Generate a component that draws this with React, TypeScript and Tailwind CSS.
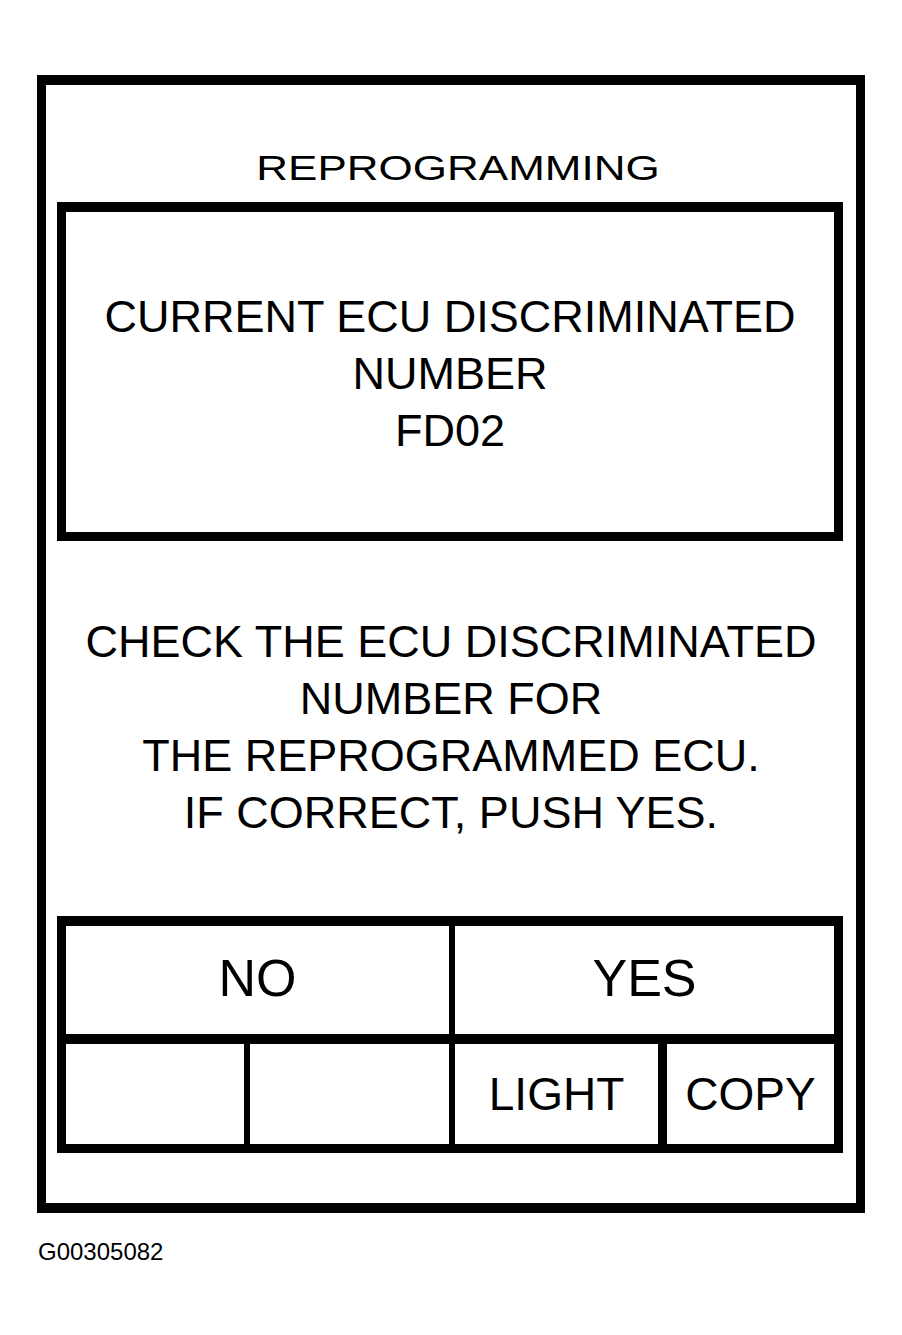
export default function App() {
  return (
    <div className="min-h-[1335px] w-[902px] bg-white pt-[75px] text-black font-['Liberation_Sans',Arial,Helvetica,sans-serif]">
      {/* screen frame */}
      <div className="ml-[37px] flex h-[1138px] w-[828px] flex-col border-x-[9px] border-y-[10px] border-black">
        {/* title */}
        <div className="mt-[61px] h-[44px] scale-y-[0.79] pl-[14px] text-center text-[44px] leading-[44px]">
          REPROGRAMMING
        </div>

        {/* current number panel */}
        <div className="ml-[11px] mt-[12px] h-[339px] w-[786px] border-[9px] border-t-[10px] border-black pt-[76px] text-center text-[45px] leading-[57px]">
          <div>CURRENT ECU DISCRIMINATED</div>
          <div>NUMBER</div>
          <div>FD02</div>
        </div>

        {/* instructions */}
        <div className="mt-[72px] text-center text-[45px] leading-[57px]">
          <div>CHECK THE ECU DISCRIMINATED</div>
          <div>NUMBER FOR</div>
          <div>THE REPROGRAMMED ECU.</div>
          <div>IF CORRECT, PUSH YES.</div>
        </div>

        {/* soft keys */}
        <div className="ml-[11px] mt-[75px] w-[786px] border-[9px] border-t-[10px] border-black">
          <div className="flex h-[108px]">
            <div className="flex w-[389px] items-center justify-center border-r-[6px] border-black pb-1 text-[52px] leading-[52px]">
              NO
            </div>
            <div className="flex flex-1 items-center justify-center pb-1 text-[52px] leading-[52px]">
              YES
            </div>
          </div>
          <div className="flex h-[110px] border-t-[10px] border-black text-[46px] leading-[46px]">
            <div className="w-[184px] border-r-[6px] border-black" />
            <div className="w-[205px] border-r-[6px] border-black" />
            <div className="flex w-[212px] items-center justify-center border-r-[9px] border-black">
              LIGHT
            </div>
            <div className="flex flex-1 items-center justify-center">COPY</div>
          </div>
        </div>
      </div>

      {/* figure id */}
      <div className="ml-[38px] mt-[27px] text-[24px] leading-[24px]">G00305082</div>
    </div>
  );
}
